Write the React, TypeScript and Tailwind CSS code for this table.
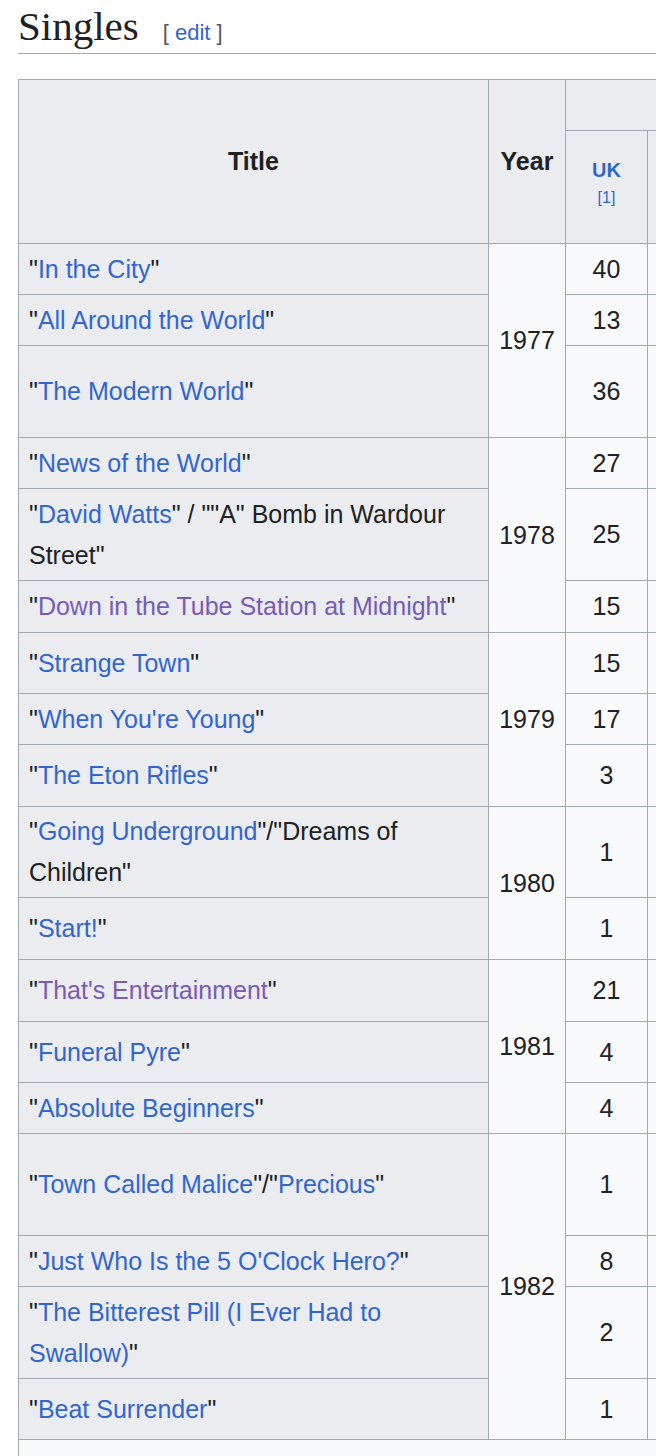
import React from "react";

type Row = { title: React.ReactNode; uk: string; h: string };

const L = ({ children, visited }: { children: React.ReactNode; visited?: boolean }) => (
  <a className={visited ? "text-[#795cb2]" : "text-[#3366cc]"}>{children}</a>
);

const groups: { year: string; rows: Row[] }[] = [
  {
    year: "1977",
    rows: [
      { title: <>"<L>In the City</L>"</>, uk: "40", h: "h-[51px]" },
      { title: <>"<L>All Around the World</L>"</>, uk: "13", h: "h-[51px]" },
      { title: <>"<L>The Modern World</L>"</>, uk: "36", h: "h-[92px]" },
    ],
  },
  {
    year: "1978",
    rows: [
      { title: <>"<L>News of the World</L>"</>, uk: "27", h: "h-[51px]" },
      { title: <>"<L>David Watts</L>" / ""A" Bomb in Wardour Street"</>, uk: "25", h: "h-[92px]" },
      { title: <>"<L visited>Down in the Tube Station at Midnight</L>"</>, uk: "15", h: "h-[52px]" },
    ],
  },
  {
    year: "1979",
    rows: [
      { title: <>"<L>Strange Town</L>"</>, uk: "15", h: "h-[61px]" },
      { title: <>"<L>When You're Young</L>"</>, uk: "17", h: "h-[51px]" },
      { title: <>"<L>The Eton Rifles</L>"</>, uk: "3", h: "h-[62px]" },
    ],
  },
  {
    year: "1980",
    rows: [
      { title: <>"<L>Going Underground</L>"/"Dreams of Children"</>, uk: "1", h: "h-[91px]" },
      { title: <>"<L>Start!</L>"</>, uk: "1", h: "h-[62px]" },
    ],
  },
  {
    year: "1981",
    rows: [
      { title: <>"<L visited>That's Entertainment</L>"</>, uk: "21", h: "h-[62px]" },
      { title: <>"<L>Funeral Pyre</L>"</>, uk: "4", h: "h-[61px]" },
      { title: <>"<L>Absolute Beginners</L>"</>, uk: "4", h: "h-[51px]" },
    ],
  },
  {
    year: "1982",
    rows: [
      { title: <>"<L>Town Called Malice</L>"/"<L>Precious</L>"</>, uk: "1", h: "h-[102px]" },
      { title: <>"<L>Just Who Is the 5 O'Clock Hero?</L>"</>, uk: "8", h: "h-[51px]" },
      { title: <>"<L>The Bitterest Pill (I Ever Had to Swallow)</L>"</>, uk: "2", h: "h-[92px]" },
      { title: <>"<L>Beat Surrender</L>"</>, uk: "1", h: "h-[61px]" },
    ],
  },
];

const extra = [0, 1, 2, 3, 4, 5, 6, 7];

export default function App() {
  return (
    <div className="w-full overflow-hidden bg-white pl-[18px] pb-10 text-[#202122] [font-family:'Liberation_Sans',Arial,sans-serif]">
      <h2 className="flex items-baseline border-b border-[#a2a9b1] pt-[6px] leading-[40px]">
        <span className="text-[41px] [font-family:'Liberation_Serif','Times_New_Roman',serif]">Singles</span>
        <span className="ml-[24px] text-[22px] text-[#54595d]">
          [ <a className="text-[#3366cc]">edit</a> ]
        </span>
      </h2>
      <table className="mt-[25px] w-[1309px] table-fixed border-collapse border border-[#a2a9b1] bg-[#f8f9fa] text-[25px] leading-[41px]">
        <colgroup>
          <col className="w-[470px]" />
          <col className="w-[77px]" />
          <col className="w-[82px]" />
          {extra.map((i) => (
            <col key={i} className="w-[85px]" />
          ))}
        </colgroup>
        <thead>
          <tr className="h-[51px]">
            <th rowSpan={2} className="border border-[#a2a9b1] bg-[#eaecf0] px-[10px] font-bold">
              Title
            </th>
            <th rowSpan={2} className="border border-[#a2a9b1] bg-[#eaecf0] px-[10px] font-bold">
              Year
            </th>
            <th colSpan={9} className="border border-[#a2a9b1] bg-[#eaecf0] px-[10px] font-bold" />
          </tr>
          <tr className="h-[113px]">
            <th className="border border-[#a2a9b1] bg-[#eaecf0] px-[4px] pb-[9px] font-bold">
              <a className="block text-[20px] leading-[24px] text-[#3366cc]">UK</a>
              <span className="mt-[6px] block text-[16px] font-normal leading-[20px] text-[#3366cc]">[1]</span>
            </th>
            {extra.map((i) => (
              <th key={i} className="border border-[#a2a9b1] bg-[#eaecf0]" />
            ))}
          </tr>
        </thead>
        <tbody>
          {groups.map((g) =>
            g.rows.map((r, idx) => (
              <tr key={g.year + idx} className={r.h}>
                <th scope="row" className="border border-[#a2a9b1] bg-[#eaecf0] px-[10px] text-left font-normal">
                  {r.title}
                </th>
                {idx === 0 && (
                  <td rowSpan={g.rows.length} className="border border-[#a2a9b1] px-[10px] text-center">
                    {g.year}
                  </td>
                )}
                <td className="border border-[#a2a9b1] px-[10px] text-center">{r.uk}</td>
                {extra.map((i) => (
                  <td key={i} className="border border-[#a2a9b1] px-[10px] text-center" />
                ))}
              </tr>
            ))
          )}
          <tr className="h-[60px]">
            <td colSpan={11} className="border border-[#a2a9b1] px-[10px] text-[20px]" />
          </tr>
        </tbody>
      </table>
    </div>
  );
}
